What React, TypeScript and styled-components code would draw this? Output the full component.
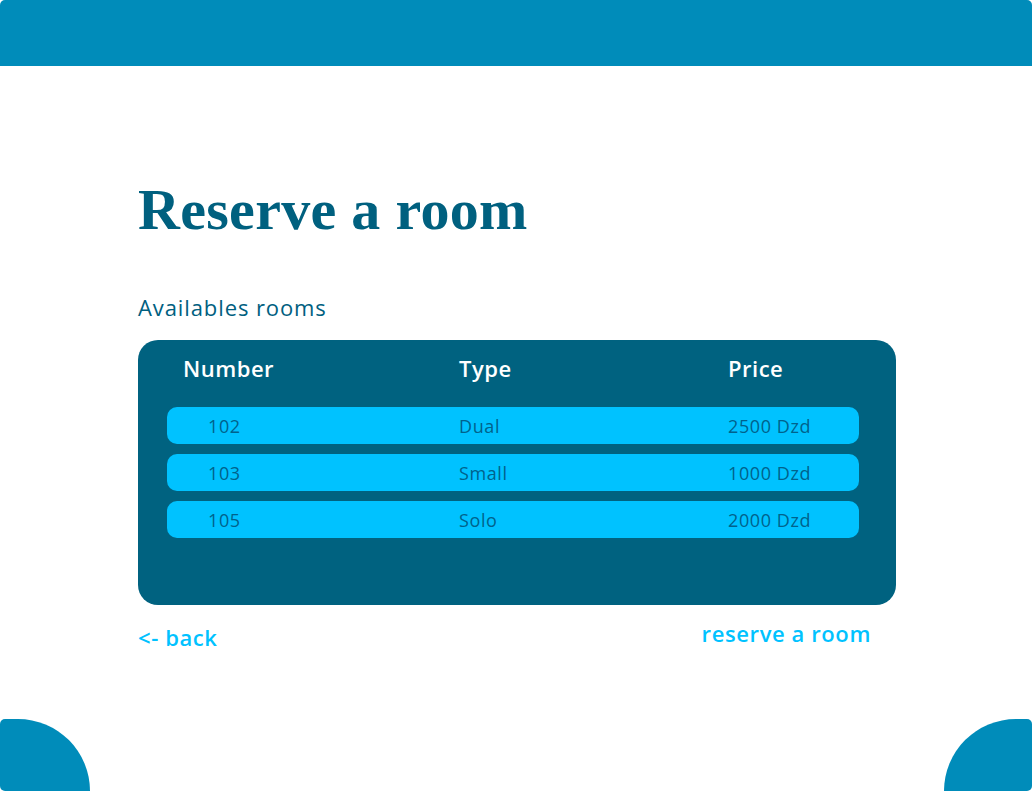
import styled, { createGlobalStyle } from "styled-components";

const GlobalStyle = createGlobalStyle`
  html, body {
    margin: 0;
    padding: 0;
    background: #ffffff;
  }
  body {
    font-family: "Open Sans", "Noto Sans", sans-serif;
  }
`;

const Page = styled.div`
  min-height: 100vh;
  display: flex;
  flex-direction: column;
  overflow: hidden;
`;

const TopBar = styled.header`
  height: 66px;
  background: #008cba;
  border-radius: 5px 5px 0 0;
`;

const Main = styled.main`
  flex: 1;
  padding: 115px 0 0 138px;
  width: 758px;
`;

const Title = styled.h1`
  margin: 0;
  font-family: "Liberation Serif", "DejaVu Serif", serif;
  font-weight: 700;
  font-size: 58px;
  line-height: 58px;
  letter-spacing: 0.3px;
  color: #00607f;
`;

const SubTitle = styled.h2`
  margin: 54px 0 0;
  font-weight: 400;
  font-size: 22px;
  line-height: 28px;
  letter-spacing: 0.9px;
  color: #00607f;
`;

const Table = styled.section`
  margin-top: 19px;
  height: 265px;
  box-sizing: border-box;
  background: #006280;
  border-radius: 20px;
  padding: 0 37px 0 29px;
`;

const HeaderRow = styled.div`
  display: grid;
  grid-template-columns: 276px 269px 1fr;
  box-sizing: border-box;
  padding: 14px 0 0 16px;
  height: 67px;
  line-height: 28px;
  color: #ffffff;
  font-size: 22px;
  font-weight: 600;
  letter-spacing: 0.5px;
`;

const Rows = styled.div`
  display: flex;
  flex-direction: column;
  gap: 10px;
`;

const Row = styled.div`
  display: grid;
  grid-template-columns: 251px 269px 1fr;
  padding-left: 41px;
  height: 37px;
  align-items: center;
  background: #00c2ff;
  border-radius: 10px;
  color: #00628c;
  font-size: 18px;
  font-weight: 400;
  letter-spacing: 0.6px;
`;

const Links = styled.div`
  display: flex;
  justify-content: space-between;
  align-items: flex-start;
  padding-right: 25px;
  margin-top: 13px;
`;

const LinkText = styled.a<{ $offset?: number }>`
  color: #00c2ff;
  font-size: 22px;
  font-weight: 600;
  letter-spacing: 0.6px;
  text-decoration: none;
  cursor: pointer;
  margin-top: ${(p) => p.$offset ?? 0}px;
`;

const Footer = styled.footer`
  display: flex;
  justify-content: space-between;
  align-items: flex-end;
`;

const Corner = styled.div<{ $side: "left" | "right" }>`
  width: ${(p) => (p.$side === "left" ? 90 : 88)}px;
  height: 72px;
  background: #008cba;
  border-radius: ${(p) =>
    p.$side === "left" ? "5px 72px 0 5px" : "72px 5px 5px 0"};
`;

const rooms = [
  { number: "102", type: "Dual", price: "2500 Dzd" },
  { number: "103", type: "Small", price: "1000 Dzd" },
  { number: "105", type: "Solo", price: "2000 Dzd" },
];

const App = () => {
  return (
    <Page>
      <GlobalStyle />
      <TopBar />
      <Main>
        <Title>Reserve a room</Title>
        <SubTitle>Availables rooms</SubTitle>
        <Table>
          <HeaderRow>
            <span>Number</span>
            <span>Type</span>
            <span>Price</span>
          </HeaderRow>
          <Rows>
            {rooms.map((room) => (
              <Row key={room.number}>
                <span>{room.number}</span>
                <span>{room.type}</span>
                <span>{room.price}</span>
              </Row>
            ))}
          </Rows>
        </Table>
        <Links>
          <LinkText $offset={4}>&lt;- back</LinkText>
          <LinkText>reserve a room</LinkText>
        </Links>
      </Main>
      <Footer>
        <Corner $side="left" />
        <Corner $side="right" />
      </Footer>
    </Page>
  );
};

export default App;
